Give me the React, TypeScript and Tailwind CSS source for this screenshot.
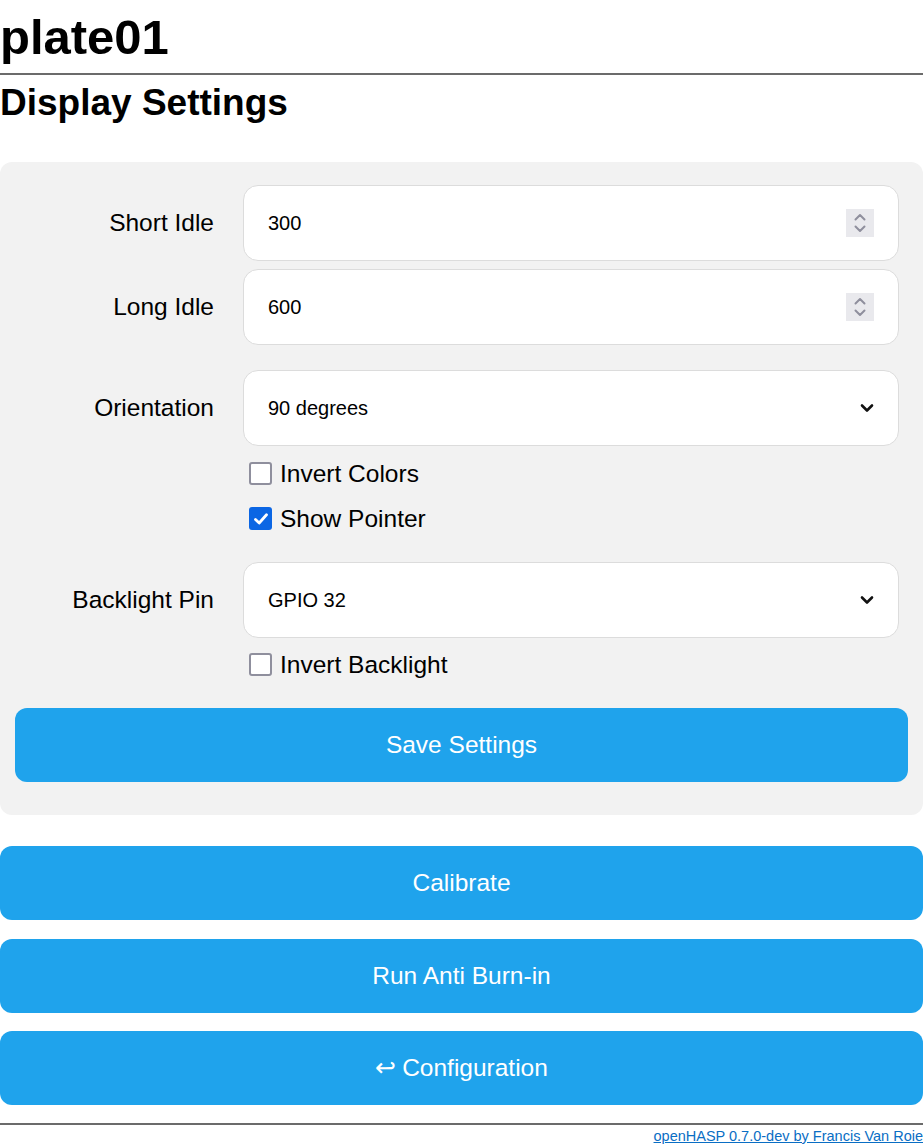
import React from "react";

const font = { fontFamily: '"Liberation Sans", Arial, sans-serif' };

function Spinner() {
  return (
    <div className="ml-auto flex h-[28px] w-[28px] flex-col items-center justify-center bg-[#e9e9ed]">
      <svg width="14" height="22" viewBox="0 0 14 22" fill="none" stroke="#8f8f9d" strokeWidth="2" strokeLinecap="round" strokeLinejoin="round">
        <path d="M2.5 7.5 L7 3 L11.5 7.5" />
        <path d="M2.5 14.5 L7 19 L11.5 14.5" />
      </svg>
    </div>
  );
}

function Chevron() {
  return (
    <svg className="ml-auto" width="14" height="10" viewBox="0 0 14 10" fill="none" stroke="#111" strokeWidth="2.6" strokeLinecap="round" strokeLinejoin="round">
      <path d="M2 2.5 L7 7.5 L12 2.5" />
    </svg>
  );
}

function Field({ label, value, kind, className }: { label: string; value: string; kind: "number" | "select"; className?: string }) {
  return (
    <div className={`flex items-center ${className ?? ""}`}>
      <div className="w-[199px] text-right text-[24.5px] leading-[28px]">{label}</div>
      <div className="ml-[29px] mr-[9px] flex h-[76px] flex-1 items-center rounded-[15px] border border-[#dcdcdc] bg-white pl-[24px] pr-[24px] text-[20px]">
        <span>{value}</span>
        {kind === "number" ? <Spinner /> : <Chevron />}
      </div>
    </div>
  );
}

function Check({ label, checked, className }: { label: string; checked?: boolean; className?: string }) {
  return (
    <div className={`flex h-[45px] items-center pl-[234px] ${className ?? ""}`}>
      {checked ? (
        <div className="flex h-[23px] w-[23px] items-center justify-center rounded-[3px] bg-[#0b66e4]">
          <svg width="16" height="14" viewBox="0 0 16 14" fill="none" stroke="white" strokeWidth="2.8" strokeLinecap="round" strokeLinejoin="round">
            <path d="M2.5 7.5 L6.2 11 L13.5 2.8" />
          </svg>
        </div>
      ) : (
        <div className="h-[23px] w-[23px] rounded-[3px] border-2 border-[#8f8f9d] bg-white" />
      )}
      <span className="ml-[8px] text-[24.5px] leading-[28px]">{label}</span>
    </div>
  );
}

function BlueButton({ children, className }: { children: React.ReactNode; className?: string }) {
  return (
    <button className={`flex h-[74px] w-full items-center justify-center rounded-[12px] bg-[#1fa3ec] text-[24.5px] text-white ${className ?? ""}`}>
      {children}
    </button>
  );
}

export default function App() {
  return (
    <div className="w-[923px] bg-white text-black" style={font}>
      <h1 className="mt-[10px] text-[49px] font-bold leading-[55px]">plate01</h1>
      <hr className="mt-[8px] border-t-2 border-[#6b6b6b]" />
      <h2 className="mt-[7px] text-[37px] font-bold leading-[41px]">Display Settings</h2>

      <div className="mt-[39px] rounded-[12px] bg-[#f2f2f2] px-[15px] pt-[23px] pb-[33px]">
        <Field label="Short Idle" value="300" kind="number" />
        <Field label="Long Idle" value="600" kind="number" className="mt-[8px]" />
        <Field label="Orientation" value="90 degrees" kind="select" className="mt-[25px]" />
        <Check label="Invert Colors" className="mt-[5px]" />
        <Check label="Show Pointer" checked />
        <Field label="Backlight Pin" value="GPIO 32" kind="select" className="mt-[21px]" />
        <Check label="Invert Backlight" className="mt-[4px]" />
        <BlueButton className="mt-[21px] w-[892px]">Save Settings</BlueButton>
      </div>

      <BlueButton className="mt-[31px]">Calibrate</BlueButton>
      <BlueButton className="mt-[19px]">Run Anti Burn-in</BlueButton>
      <BlueButton className="mt-[18px]">
        <span className="mr-[6px]">&#x21A9;</span>Configuration
      </BlueButton>

      <hr className="mt-[18px] border-t-2 border-[#6b6b6b]" />
      <div className="mt-[2px] pb-[3px] text-right text-[14.5px] leading-[18px]">
        <a href="#" className="text-[#0a6ec4] underline">openHASP 0.7.0-dev by Francis Van Roie</a>
      </div>
    </div>
  );
}
